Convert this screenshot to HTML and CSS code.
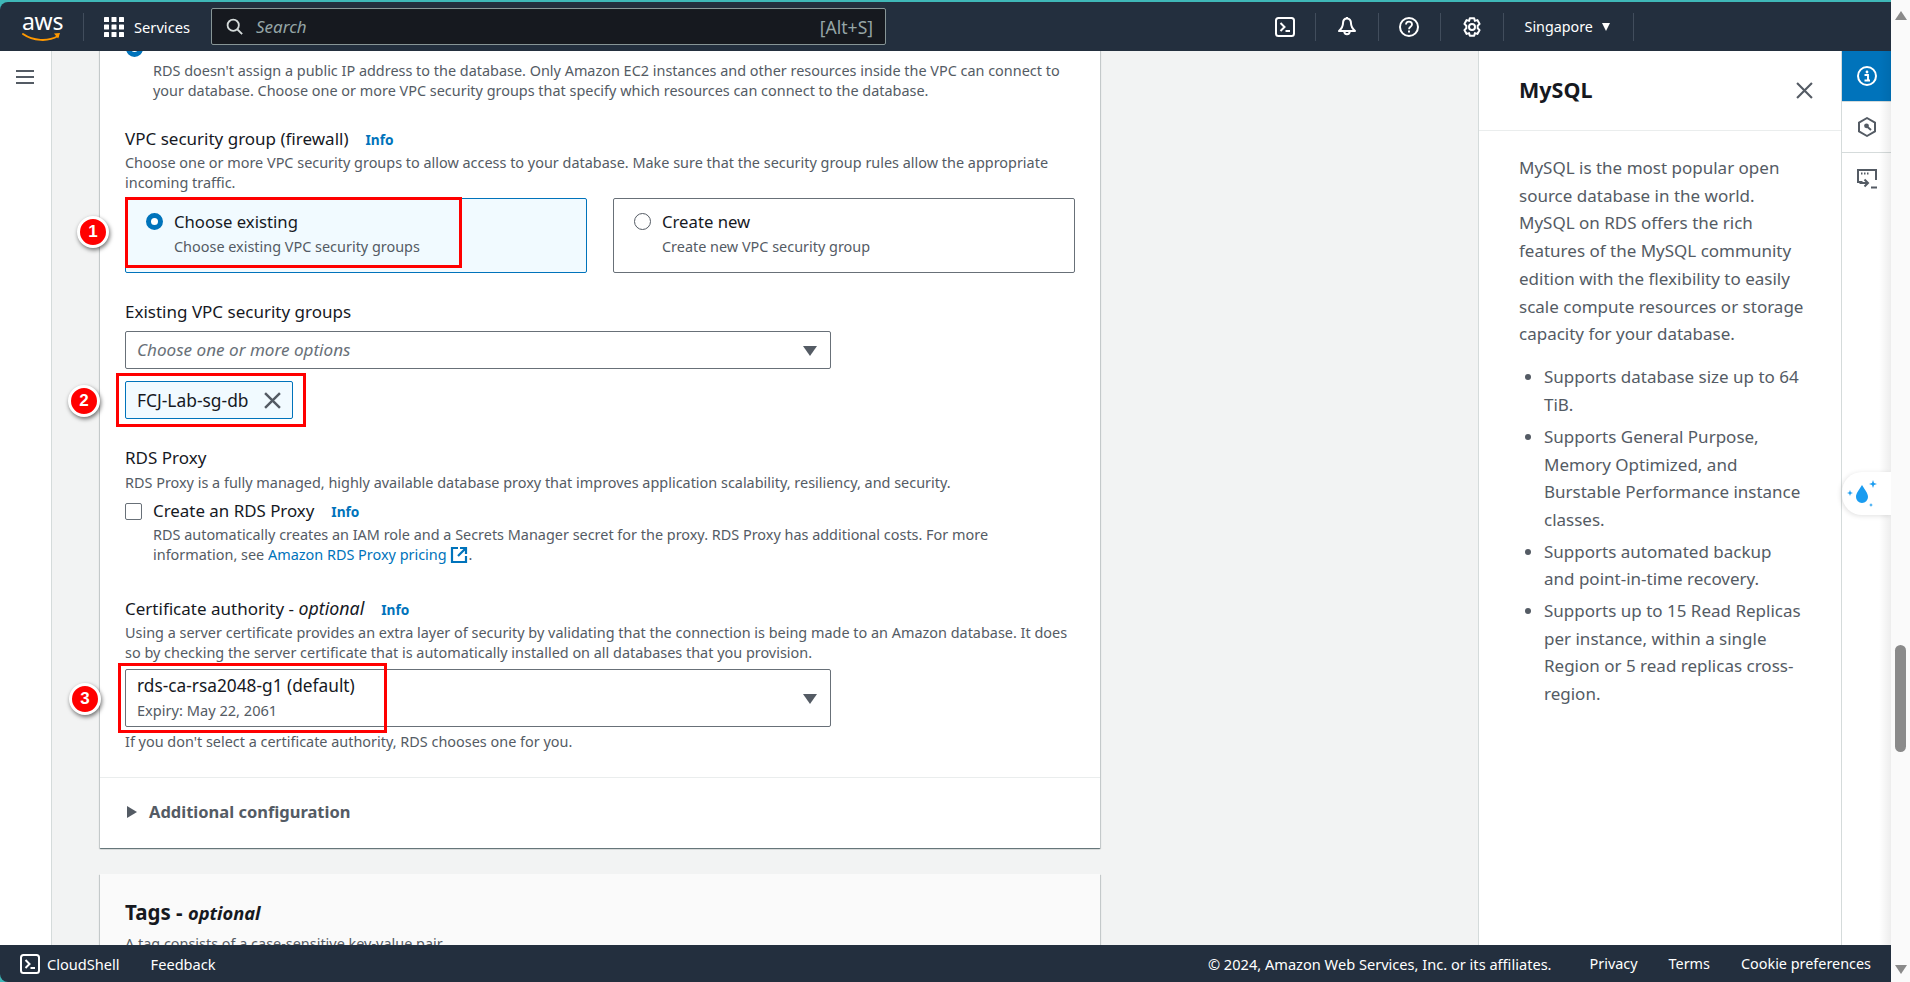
FILE: index.html
```html
<!DOCTYPE html>
<html lang="en">
<head>
<meta charset="utf-8">
<title>Create database - RDS</title>
<link rel="stylesheet" href="styles.css">
</head>
<body>
<div class="page">
  <div class="app">
    <header class="topbar">
      <div class="logo">
        <span class="logo-text">aws</span>
        <svg class="logo-smile" viewBox="0 0 40 12"><path d="M1 2c10 7 25 8 35 2" fill="none" stroke="#f90" stroke-width="2" stroke-linecap="round"/><path d="M32 1.500l6-.5-1.800 5.500z" fill="#f90"/></svg>
      </div>
      <span class="sep sep-logo"></span>
      <svg class="grid-icon" viewBox="0 0 20 20" fill="#fff"><rect width="5" height="5" rx=".6"/><rect x="7.5" width="5" height="5" rx=".6"/><rect x="15" width="5" height="5" rx=".6"/><rect y="7.5" width="5" height="5" rx=".6"/><rect x="7.5" y="7.5" width="5" height="5" rx=".6"/><rect x="15" y="7.5" width="5" height="5" rx=".6"/><rect y="15" width="5" height="5" rx=".6"/><rect x="7.5" y="15" width="5" height="5" rx=".6"/><rect x="15" y="15" width="5" height="5" rx=".6"/></svg>
      <span class="services">Services</span>
      <div class="search">
        <svg class="search-icon" viewBox="0 0 16 16" fill="none" stroke="#d5dbdb" stroke-width="1.7"><circle cx="6.8" cy="6.8" r="5.3"/><path d="M10.6 10.6l4.6 4.6"/></svg>
        <span class="search-text">Search</span>
        <span class="search-key">[Alt+S]</span>
      </div>
      <div class="top-actions">
        <span class="top-btn"><svg viewBox="0 0 20 20" fill="none" stroke="#fff" stroke-width="2"><rect x="1" y="1" width="18" height="18" rx="2.500"/><path d="M5.500 6l4 4-4 4M10.500 14h4.500"/></svg></span>
        <span class="sep"></span>
        <span class="top-btn"><svg viewBox="0 0 20 20" fill="none" stroke="#fff" stroke-width="2" stroke-linejoin="round"><path d="M10 1.500c-2.700 0-4 2-4 4.800 0 3-1.300 5.200-4 7.700h16c-2.700-2.500-4-4.700-4-7.700 0-2.800-1.300-4.800-4-4.800z"/><path d="M7.300 14.500a2.700 2.700 0 0 0 5.400 0"/><path d="M10 0v2"/></svg></span>
        <span class="sep"></span>
        <span class="top-btn"><svg viewBox="0 0 20 20" fill="none" stroke="#fff" stroke-width="2"><circle cx="10" cy="10" r="9"/><path d="M7 7.600c0-1.800 1.300-3 3-3s3 1.100 3 2.800c0 2.400-3 2.300-3 4.800" stroke-width="1.800"/><path d="M10 13.500v2"/></svg></span>
        <span class="sep"></span>
        <span class="top-btn"><svg viewBox="0 0 20 20" fill="none" stroke="#fff" stroke-width="2" stroke-linejoin="round"><circle cx="10" cy="10" r="3"/><path d="M7.800 1.300h4.400l.7 2.600 2.500-.8 2.200 3.800L15.700 8.800v2.400l1.900 1.900-2.200 3.800-2.500-.8-.7 2.600H7.800l-.7-2.600-2.500.8-2.200-3.800 1.900-1.900V8.800L2.400 6.900l2.200-3.800 2.500.8z"/></svg></span>
        <span class="sep"></span>
        <span class="region">Singapore <i class="tri-down"></i></span>
        <span class="sep"></span>
      </div>
    </header>

    <div class="workspace">
      <nav class="nav-strip">
        <svg class="hamburger" viewBox="0 0 18 16" fill="none" stroke="#545b64" stroke-width="2"><path d="M0 2h18M0 8h18M0 14h18"/></svg>
      </nav>

      <main class="main">
        <section class="card">
          <div class="clipped-option"><span class="radio radio-on"></span></div>
          <p class="desc indent28">RDS doesn't assign a public IP address to the database. Only Amazon EC2 instances and other resources inside the VPC can connect to<br>your database. Choose one or more VPC security groups that specify which resources can connect to the database.</p>

          <div class="label label-vpc">VPC security group (firewall) <a class="info">Info</a></div>
          <p class="desc mt4">Choose one or more VPC security groups to allow access to your database. Make sure that the security group rules allow the appropriate<br>incoming traffic.</p>
          <div class="tiles">
            <div class="tile tile-on">
              <span class="radio radio-on"></span>
              <div><div class="tile-title">Choose existing</div><div class="tile-desc">Choose existing VPC security groups</div></div>
            </div>
            <div class="tile">
              <span class="radio"></span>
              <div><div class="tile-title">Create new</div><div class="tile-desc">Create new VPC security group</div></div>
            </div>
          </div>

          <div class="label label-existing">Existing VPC security groups</div>
          <div class="select select-a"><span class="placeholder">Choose one or more options</span><i class="caret"></i></div>
          <div class="token">FCJ-Lab-sg-db <svg class="token-x" viewBox="0 0 16 16" fill="none" stroke="#545b64" stroke-width="2.300"><path d="M1 1l14 14M15 1L1 15"/></svg></div>

          <div class="label label-proxy">RDS Proxy</div>
          <p class="desc mt5">RDS Proxy is a fully managed, highly available database proxy that improves application scalability, resiliency, and security.</p>
          <div class="check-row"><span class="checkbox"></span><span class="check-label">Create an RDS Proxy <a class="info">Info</a></span></div>
          <p class="desc indent28 mt4">RDS automatically creates an IAM role and a Secrets Manager secret for the proxy. RDS Proxy has additional costs. For more<br>information, see <a class="link">Amazon RDS Proxy pricing <svg class="ext" viewBox="0 0 18 18" fill="none" stroke="#0073bb" stroke-width="2.200"><path d="M8 2H2v14h14v-6M10 2h6v6M16 2L8 10"/></svg></a>.</p>

          <div class="label label-cert">Certificate authority - <em>optional</em> <a class="info">Info</a></div>
          <p class="desc mt5">Using a server certificate provides an extra layer of security by validating that the connection is being made to an Amazon database. It does<br>so by checking the server certificate that is automatically installed on all databases that you provision.</p>
          <div class="select select-b"><div><div class="select-value">rds-ca-rsa2048-g1 (default)</div><div class="select-sub">Expiry: May 22, 2061</div></div><i class="caret"></i></div>
          <p class="desc mt5">If you don't select a certificate authority, RDS chooses one for you.</p>

          <hr class="divider">
          <div class="expander"><i class="tri-right"></i>Additional configuration</div>
        </section>

        <section class="card card-tags">
          <h2 class="tags-title">Tags - <em>optional</em></h2>
          <p class="desc tags-desc">A tag consists of a case-sensitive key-value pair.</p>
        </section>

        <span class="mark mark-1"></span>
        <span class="mark mark-2"></span>
        <span class="mark mark-3"></span>
        <span class="badge badge-1">1</span>
        <span class="badge badge-2">2</span>
        <span class="badge badge-3">3</span>
      </main>

      <aside class="panel">
        <div class="panel-head">
          <h2>MySQL</h2>
          <svg class="panel-close" viewBox="0 0 16 16" fill="none" stroke="#545b64" stroke-width="2"><path d="M1 1l14 14M15 1L1 15"/></svg>
        </div>
        <div class="panel-body">
          <p>MySQL is the most popular open<br>source database in the world.<br>MySQL on RDS offers the rich<br>features of the MySQL community<br>edition with the flexibility to easily<br>scale compute resources or storage<br>capacity for your database.</p>
          <ul>
            <li>Supports database size up to 64<br>TiB.</li>
            <li>Supports General Purpose,<br>Memory Optimized, and<br>Burstable Performance instance<br>classes.</li>
            <li>Supports automated backup<br>and point-in-time recovery.</li>
            <li>Supports up to 15 Read Replicas<br>per instance, within a single<br>Region or 5 read replicas cross-<br>region.</li>
          </ul>
        </div>
      </aside>

      <div class="rail">
        <div class="rail-btn rail-on"><svg viewBox="0 0 20 20" fill="none" stroke="#fff" stroke-width="2"><circle cx="10" cy="10" r="9"/><circle cx="10" cy="6" r="1.400" fill="#fff" stroke="none"/><path d="M7.500 9h3.500v5M7.500 14.500h5.500" stroke-width="1.900"/></svg></div>
        <div class="rail-btn"><svg viewBox="0 0 20 20" fill="none" stroke="#545b64" stroke-width="2" stroke-linejoin="round"><path d="M10 1l8 4.600v8.800L10 19l-8-4.600V5.600z"/><circle cx="9.500" cy="8.800" r="2.400" fill="#545b64" stroke="none"/><path d="M10 9.500l4 3.500"/></svg></div>
        <div class="rail-btn"><svg viewBox="0 0 20 20" fill="none" stroke="#545b64" stroke-width="2"><path d="M5.500 13H1V1h18v10"/><path d="M4 4.500h1.500M7 4.500h1.500M10 4.500h1.500" stroke-width="1.800"/><path d="M2.500 14h8M7.500 10.500l3.500 3.500-3.500 3.500M14 18.500h6"/></svg></div>
        <div class="drop-btn"><svg viewBox="0 0 30 30" fill="#1a9cf0"><path d="M15 6c3 5 6 8 6 12a6 6 0 0 1-12 0c0-4 3-7 6-12z"/><path d="M26 1l1 3 3 1-3 1-1 3-1-3-3-1 3-1zM3 11l.8 2.200L6 14l-2.200.8L3 17l-.8-2.200L0 14l2.200-.8zM24 24l.6 1.400L26 26l-1.400.6L24 28l-.6-1.400L22 26l1.400-.6z"/></svg></div>
      </div>
    </div>

    <footer class="footer">
      <svg class="footer-shell" viewBox="0 0 20 20" fill="none" stroke="#fff" stroke-width="2"><rect x="1" y="1" width="18" height="18" rx="2.500"/><path d="M5.500 6l4 4-4 4M10.500 14h4.500"/></svg>
      <span class="foot-cloud">CloudShell</span>
      <span class="foot-feedback">Feedback</span>
      <span class="foot-copy">© 2024, Amazon Web Services, Inc. or its affiliates.</span>
      <span class="foot-link foot-first">Privacy</span>
      <span class="foot-link">Terms</span>
      <span class="foot-link foot-last">Cookie preferences</span>
    </footer>
  </div>

  <div class="scrollbar">
    <i class="sb-up"></i>
    <div class="sb-track"><div class="sb-thumb"></div></div>
    <i class="sb-down"></i>
  </div>
</div>
</body>
</html>
```

FILE: styles.css
```css
* { box-sizing: border-box; }
html, body { margin: 0; height: 100%; overflow: hidden; }
body { background: #3fb8b8; font-family: "Noto Sans", sans-serif; font-size: 14.430px; line-height: 20px; color: #16191f; }
p, h2, ul { margin: 0; padding: 0; }
a { color: #0073bb; }

.page { display: flex; height: 982px; padding-top: 2px; }
.app { width: 1891px; display: flex; flex-direction: column; border-radius: 8px 0 0 8px; overflow: hidden; }

/* top bar */
.topbar { height: 49px; flex: none; background: #232f3e; display: flex; align-items: center; color: #fff; position: relative; }
.logo { width: 40px; margin-left: 22px; position: relative; height: 36px; flex: none; }
.logo-text { display: block; font: 400 23px/24px "Noto Sans", sans-serif; letter-spacing: -0.3px; text-align: center; }
.logo-smile { display: block; width: 40px; height: 12px; margin-top: -1px; }
.sep { width: 1px; height: 28px; background: #414d5c; flex: none; }
.sep-logo { margin-left: 21px; }
.grid-icon { width: 20px; height: 20px; margin-left: 20px; flex: none; }
.services { margin-left: 10px; width: 77px; font-size: 14.700px; }
.search { width: 675px; height: 37px; background: #16191f; border: 1px solid #879596; border-radius: 2px; display: flex; align-items: center; padding: 0 12px 0 14px; flex: none; }
.search-icon { width: 17px; height: 17px; }
.search-text { margin-left: 13px; font-style: italic; font-size: 17px; color: #95a5a6; }
.search-key { margin-left: auto; font-size: 17.500px; color: #95a5a6; }
.top-actions { margin-left: 368px; display: flex; align-items: center; }
.top-btn { width: 61.400px; display: flex; justify-content: center; }
.top-btn svg { width: 20px; height: 20px; display: block; }
.region { width: 129px; padding-left: 21px; font-size: 14.300px; display: flex; align-items: center; gap: 9px; }
.tri-down { width: 0; height: 0; border: 4.500px solid transparent; border-top: 8px solid #fff; border-bottom: 0; }

/* workspace */
.workspace { flex: 1; display: flex; min-height: 0; background: #fff; }
.nav-strip { width: 52px; flex: none; background: #fff; border-right: 1px solid #d5dbdb; box-shadow: 1px 0 0 #e4e8e8; padding: 18px 0 0 16px; }
.hamburger { display: block; width: 18px; height: 16px; }
.main { width: 1426px; flex: none; background: #f2f3f3; padding: 0 0 0 48px; overflow: hidden; position: relative; }

.card { width: 1000px; background: #fff; padding: 0 25px; box-shadow: 0 1px 1px rgba(0, 28, 36, .45), 1px 1px 1px rgba(0, 28, 36, .12), -1px 1px 1px rgba(0, 28, 36, .12); }
.card:first-child { margin-top: -20px; padding-bottom: 26px; }
.clipped-option { height: 30px; padding-top: 9px; }
.clipped-option .radio { margin: 0 0 0 1px; }

.desc { color: #545b64; }
.indent28 { padding-left: 28px; }
.mt4 { margin-top: 4px; }
.mt5 { margin-top: 5px; }
.label { font-size: 17px; height: 20px; }
.label em { font-size: 17.800px; }
.label-vpc { margin-top: 28px; }
.label-existing { margin-top: 29px; }
.label-proxy { margin-top: 29px; }
.label-cert { margin-top: 33px; }
.info { font-size: 13.700px; font-weight: 700; margin-left: 12.500px; line-height: 0; }
.link { color: #0073bb; }
.ext { width: 18px; height: 18px; vertical-align: -4px; }

.radio { display: block; width: 17px; height: 17px; border-radius: 50%; border: 1px solid #545b64; background: #fff; flex: none; margin-top: 1px; }
.radio-on { border: 5px solid #0073bb; }
.tiles { display: flex; gap: 26px; margin-top: 5px; }
.tile { width: 463px; height: 75px; border: 1px solid #687078; border-radius: 2px; display: flex; gap: 11px; padding: 13px 20px 0 20px; }
.tile-on { background: #f1faff; border-color: #0073bb; }
.tile-title { font-size: 16.700px; }
.tile-desc { color: #545b64; margin-top: 5px; }

.select { width: 706px; border: 1px solid #687078; border-radius: 2px; background: #fff; display: flex; align-items: center; justify-content: space-between; padding: 0 13px 0 11px; font-size: 17.100px; }
.select-a { height: 38px; margin-top: 9px; }
.select-b { height: 58px; margin-top: 6px; }
.placeholder { font-style: italic; color: #687078; }
.caret { width: 0; height: 0; border: 7px solid transparent; border-top: 10px solid #545b64; border-bottom: 0; margin-top: 1px; }
.select-value { line-height: 20px; font-size: 17.300px; }
.select-sub { color: #545b64; font-size: 14.600px; margin-top: 4px; }

.token { width: 168px; height: 38px; margin-top: 12px; background: #f1faff; border: 1px solid #0073bb; border-radius: 2px; padding: 0 11px; display: flex; align-items: center; justify-content: space-between; font-size: 17.400px; }
.token-x { width: 17px; height: 17px; }

.check-row { display: flex; align-items: center; margin-top: 8px; height: 20px; }
.checkbox { width: 17px; height: 17px; border: 1px solid #687078; border-radius: 2px; background: #fff; }
.check-label { margin-left: 11px; font-size: 16.900px; }

.divider { border: 0; border-top: 1px solid #eaeded; margin: 25px -25px 0; }
.expander { margin-top: 24px; font-size: 16.500px; font-weight: 700; color: #545b64; display: flex; align-items: center; }
.tri-right { width: 0; height: 0; border: 6px solid transparent; border-left: 10px solid #545b64; border-right: 0; margin: 0 12px 0 2px; }

.card-tags { margin-top: 26px; height: 120px; background: #fafafa; padding-top: 26px; }
.tags-title { font-size: 20.500px; line-height: 24px; font-weight: 700; }
.tags-title em { font-size: 18.300px; }
.tags-desc { margin-top: 9px; }

/* annotations over the form */
.mark { position: absolute; border: 3px solid #f00; pointer-events: none; }
.mark-1 { left: 73px; top: 146px; width: 337px; height: 71px; }
.mark-2 { left: 64px; top: 322px; width: 190px; height: 54px; }
.mark-3 { left: 66px; top: 612px; width: 269px; height: 70px; }
.badge { position: absolute; width: 32px; height: 32px; border-radius: 50%; background: #f00; border: 3px solid #fff; box-shadow: 1px 2px 4px rgba(0, 0, 0, .55); color: #fff; font: 700 17px/26px "Liberation Sans", sans-serif; text-align: center; }
.badge-1 { left: 25px; top: 165px; }
.badge-2 { left: 16px; top: 334px; }
.badge-3 { left: 17px; top: 632px; }

/* help panel */
.panel { width: 363px; flex: none; background: #fff; border-left: 1px solid #d5dbdb; }
.panel-head { height: 80px; border-bottom: 1px solid #eaeded; padding: 0 27px 0 40px; display: flex; align-items: center; justify-content: space-between; }
.panel-head h2 { font-size: 21.500px; font-weight: 700; line-height: 28px; margin-top: -1px; }
.panel-close { width: 17px; height: 17px; margin-right: 1px; }
.panel-body { padding: 23px 0 0 40px; font-size: 17px; line-height: 27.700px; color: #545b64; white-space: nowrap; }
.panel-body ul { list-style: disc; margin: 15.500px 0 0; padding-left: 25px; }
.panel-body li { margin-bottom: 4px; }

/* right rail */
.rail { width: 50px; flex: none; background: #fff; border-left: 1px solid #d5dbdb; position: relative; }
.rail::after { content: ""; position: absolute; top: 0; bottom: 0; right: 0; width: 12px; background: linear-gradient(to right, rgba(0, 0, 0, 0), rgba(0, 0, 0, .07)); pointer-events: none; }
.rail-btn { height: 51px; display: flex; align-items: center; justify-content: center; border-bottom: 1px solid #d5dbdb; }
.rail-btn:nth-child(3) { border-bottom: 0; }
.rail-on { background: #0073bb; }
.rail-btn svg { width: 20px; height: 20px; }
.drop-btn { position: absolute; z-index: 1; right: 0; top: 421px; width: 49px; height: 43px; background: #fff; border-radius: 20px 0 0 20px; box-shadow: -1px 1px 5px rgba(0, 0, 0, .12); display: flex; align-items: center; padding-left: 5px; }
.drop-btn svg { width: 30px; height: 30px; }

/* footer */
.footer { height: 37px; flex: none; background: #232f3e; color: #fff; display: flex; align-items: center; font-size: 14.600px; }
.footer-shell { width: 20px; height: 20px; margin-left: 20px; flex: none; }
.foot-cloud { margin-left: 7px; }
.foot-feedback { margin-left: 31px; }
.foot-copy { margin-left: auto; }
.foot-link { margin-left: 31px; font-size: 14.400px; }
.foot-first { margin-left: 38px; }
.foot-last { margin-right: 20px; }

/* browser scrollbar */
.scrollbar { width: 19px; flex: none; background: #fafafa; display: flex; flex-direction: column; align-items: center; margin-top: -2px; position: relative; }
.sb-up { width: 0; height: 0; border: 6px solid transparent; border-bottom: 9px solid #8a8a8a; border-top: 0; margin-top: 11px; }
.sb-track { flex: 1; width: 100%; position: relative; }
.sb-thumb { position: absolute; left: 4px; top: 625px; width: 11px; height: 107px; background: #8a8a8a; border-radius: 6px; }
.sb-down { width: 0; height: 0; border: 6px solid transparent; border-top: 9px solid #8a8a8a; border-bottom: 0; margin-bottom: 8px; }
```
